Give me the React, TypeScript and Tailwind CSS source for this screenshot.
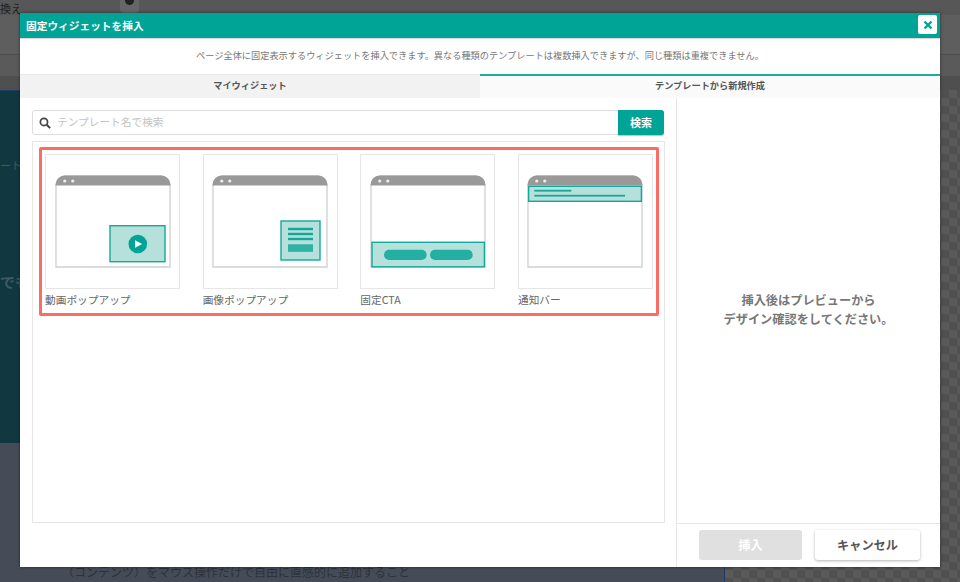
const font = "font-['Noto_Sans_CJK_JP','Noto_Sans',sans-serif]";

function BrowserFrame({ children }: { children?: React.ReactNode }) {
  return (
    <svg viewBox="0 0 116 93" className="h-[93px] w-[116px]">
      <path d="M1 92V10a9 9 0 0 1 9-9h96a9 9 0 0 1 9 9v82z" fill="#fff" stroke="#cfcfcf" strokeWidth="1.3" />
      <path d="M.5 10.5V10a9.5 9.5 0 0 1 9.5-9.5h96a9.5 9.5 0 0 1 9.5 9.5v.5z" fill="#999" />
      <circle cx="9.8" cy="6" r="1.6" fill="#eee" />
      <circle cx="17.8" cy="6" r="1.6" fill="#eee" />
      {children}
    </svg>
  );
}

const templates = [
  {
    label: '動画ポップアップ',
    art: (
      <>
        <rect x="55" y="50.7" width="55" height="36" fill="#b5e0dc" stroke="#14a89b" strokeWidth="1.4" />
        <circle cx="82.8" cy="69" r="9.3" fill="#00a496" />
        <path d="M80 65.2l7.2 3.8-7.2 3.8z" fill="#fff" />
      </>
    ),
  },
  {
    label: '画像ポップアップ',
    art: (
      <>
        <rect x="69" y="46" width="39" height="39" fill="#b5e0dc" stroke="#14a89b" strokeWidth="1.4" />
        <rect x="76" y="52.8" width="25" height="2.4" fill="#14a89b" />
        <rect x="76" y="57.8" width="25" height="2.4" fill="#14a89b" />
        <rect x="76" y="62.8" width="25" height="2.4" fill="#14a89b" />
        <rect x="76" y="69.3" width="25" height="7.5" fill="#2fb1a5" />
      </>
    ),
  },
  {
    label: '固定CTA',
    art: (
      <>
        <rect x="2" y="67.3" width="112.4" height="24.5" fill="#b5e0dc" stroke="#14a89b" strokeWidth="1.4" />
        <rect x="14" y="74.7" width="42.7" height="10.3" rx="5.1" fill="#22b0a3" />
        <rect x="60" y="74.7" width="42.7" height="10.3" rx="5.1" fill="#22b0a3" />
      </>
    ),
  },
  {
    label: '通知バー',
    art: (
      <>
        <rect x="1.6" y="11.3" width="112.8" height="15" fill="#b5e0dc" stroke="#14a89b" strokeWidth="1.4" />
        <rect x="7.3" y="14.8" width="37" height="1.8" fill="#14a89b" />
        <rect x="7.3" y="19.8" width="90.7" height="1.8" fill="#14a89b" />
      </>
    ),
  },
];

export default function App() {
  return (
    <div className={`relative h-[582px] w-[960px] overflow-hidden bg-[#555] ${font}`}>
      {/* dimmed editor behind the modal */}
      <div className="flex h-full flex-col">
        <div className="flex h-[15px] items-start bg-[#575757]">
          <span className="text-[11px] leading-[16px] text-[#222]">換え</span>
          <div className="ml-[98px] flex h-[13px] w-[19px] justify-center rounded-b bg-[#666]">
            <div className="h-[5px] w-[9px] rounded-b-full bg-[#222]" />
          </div>
        </div>
        <div className="h-[42px] border-b border-[#4e4e4e] bg-[#5e5e5e]" />
        <div className="h-[21px] bg-[#5a5a5a]" />
        <div className="h-[15px] bg-[#4f4f4f]" />
        <div className="flex flex-1">
          <div className="flex w-[725px] flex-col border-r border-[#1d3a6a]">
            <div className="flex h-[353px] flex-col border-t border-[#1d3a6a] bg-[#12383f] pt-[66px] text-[#3d5b60]">
              <span className="text-[11px] leading-[16px]">ート</span>
              <span className="mt-[99px] text-[15px] font-bold leading-[20px]">でも</span>
            </div>
            <div className="flex-1 bg-[#454c58] pl-[62px] pt-[119px] text-[12px] leading-[20px] text-[#2c323b]">
              （コンテンツ）をマウス操作だけで自由に直感的に追加すること
            </div>
          </div>
          <div className="flex-1 bg-[#565656] bg-[repeating-conic-gradient(#505050_0_25%,#5a5a5a_0_50%)] bg-[length:16px_16px]" />
        </div>
      </div>

      {/* modal */}
      <div className="absolute left-[20px] top-[13px] flex h-[554px] w-[920px] flex-col bg-white shadow-[0_0_3px_rgba(0,0,0,0.5)]">
        <div className="flex h-[25px] items-start justify-between bg-[#00a496] pl-[6px] pr-[3px] shadow-[0_1px_1px_rgba(0,0,0,0.15)]">
          <span className="text-[10.7px] font-bold leading-[25px] text-white">固定ウィジェットを挿入</span>
          <button className="mt-[2px] flex h-[19px] w-[19px] items-center justify-center rounded-[2px] bg-white text-[#00a496]">
            <svg viewBox="0 0 10 10" className="h-[10px] w-[10px]">
              <path d="M1.5 1.5l7 7M8.5 1.5l-7 7" stroke="currentColor" strokeWidth="2.4" />
            </svg>
          </button>
        </div>
        <div className="flex h-[36px] items-center justify-center text-[9.2px] text-[#777]">
          ページ全体に固定表示するウィジェットを挿入できます。異なる種類のテンプレートは複数挿入できますが、同じ種類は重複できません。
        </div>
        <div className="flex h-[24px] text-[9.2px] font-bold text-[#555]">
          <div className="flex w-[460px] items-center justify-center border-t border-[#e8e8e8] bg-[#f2f2f2] pb-[1px]">マイウィジェット</div>
          <div className="flex flex-1 items-center justify-center border-t-2 border-[#1fac9f] bg-[#fafafa] pb-[2px]">テンプレートから新規作成</div>
        </div>

        <div className="flex flex-1">
          <div className="flex w-[657px] flex-col border-r border-[#e6e6e6] pb-[44px] pl-[12px] pr-[11px] pt-[12px]">
            <div className="mr-[1px] flex h-[25px] rounded-[3px] border border-[#dedede]">
              <div className="flex flex-1 items-center gap-[6px] pl-[6px]">
                <svg viewBox="0 0 14 14" className="h-[12px] w-[12px] text-[#444]">
                  <circle cx="5.8" cy="5.8" r="4.2" fill="none" stroke="currentColor" strokeWidth="2" />
                  <path d="M9 9l4 4" stroke="currentColor" strokeWidth="2.4" />
                </svg>
                <span className="text-[10.7px] text-[#c4c4c4]">テンプレート名で検索</span>
              </div>
              <button className="-my-px -mr-px w-[46px] rounded-r-[3px] bg-[#00a496] text-[11px] font-bold text-white shadow-[0_1px_1px_rgba(0,0,0,0.25)]">
                検索
              </button>
            </div>
            <div className="mt-[6px] flex-1 border border-[#e6e6e6] pl-[6px] pr-[5px] pt-[5px]">
              <div className="grid h-[169px] grid-cols-[135px_135px_135px_135px] justify-between rounded-[2px] border-[3px] border-[#f96d62] pl-[3px] pr-[3px] pt-[4px]">
                {templates.map((t) => (
                  <div key={t.label}>
                    <div className="flex h-[135px] items-center justify-center border border-[#e6e6e6]">
                      <BrowserFrame>{t.art}</BrowserFrame>
                    </div>
                    <div className="mt-[3px] text-[10.7px] leading-[15px] text-[#666]">{t.label}</div>
                  </div>
                ))}
              </div>
            </div>
          </div>

          <div className="flex flex-1 flex-col">
            <div className="flex flex-1 items-center justify-center pb-[1px] text-center text-[12.2px] font-bold leading-[19px] text-[#777]">
              <p>
                挿入後はプレビューから
                <br />
                デザイン確認をしてください。
              </p>
            </div>
            <div className="flex h-[44px] gap-[13px] border-t border-[#e6e6e6] pl-[22px] pt-[6px]">
              <button className="h-[30px] w-[103px] rounded-[3px] bg-[#e0e0e0] text-[12.2px] font-bold text-white">挿入</button>
              <button className="h-[30px] w-[105px] rounded-[3px] bg-white text-[12.2px] font-bold text-[#555] shadow-[0_1px_3px_rgba(0,0,0,0.3)]">
                キャンセル
              </button>
            </div>
          </div>
        </div>
      </div>
    </div>
  );
}
